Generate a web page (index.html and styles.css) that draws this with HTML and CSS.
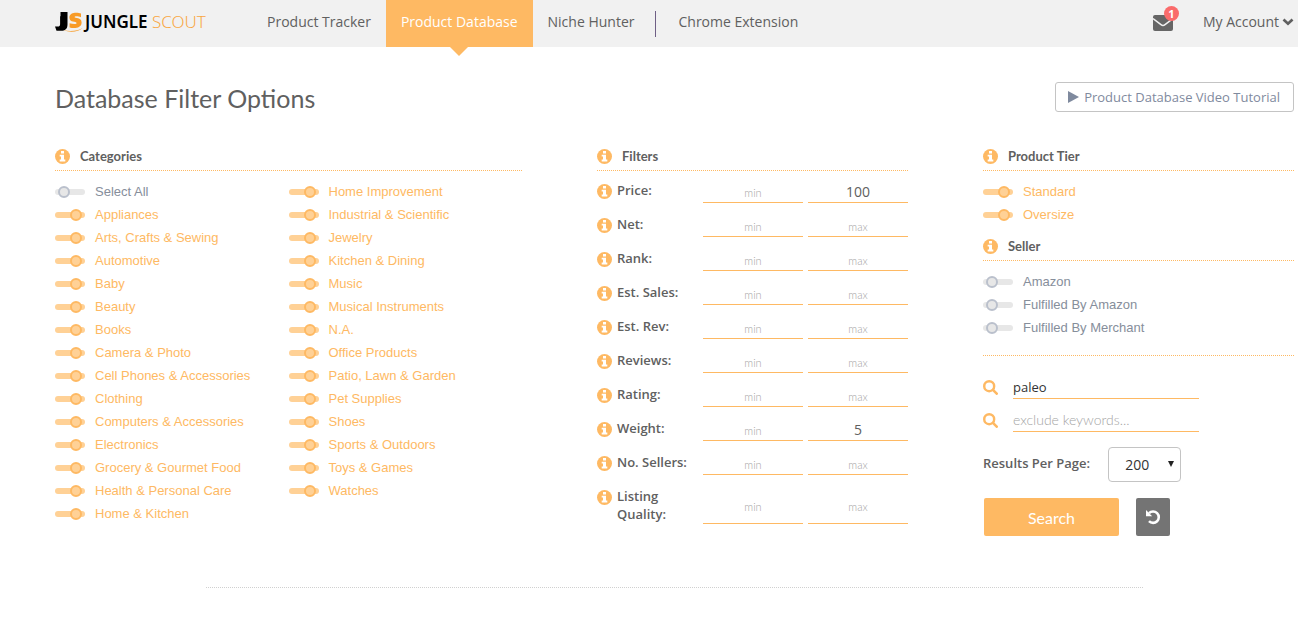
FILE: index.html
```html
<!DOCTYPE html>
<html lang="en">
<head>
<meta charset="utf-8">
<title>Product Database</title>
<link rel="stylesheet" href="styles.css">
</head>
<body>
<svg class="sprite" aria-hidden="true">
  <symbol id="info" viewBox="0 0 16 16"><circle cx="8" cy="8" r="8" fill="#feb963"/><path d="M6.400 2.200h3.200v2.500H6.400zM5 6h4.600v5.200H11v2.100H5v-2.100h1.400V8H5z" fill="#fff"/></symbol>
  <symbol id="search" viewBox="0 0 16 16"><circle cx="6.600" cy="6.600" r="5.300" fill="none" stroke="#feb963" stroke-width="2.600"/><path d="M10.600 10.600l4 4" stroke="#feb963" stroke-width="2.800" stroke-linecap="round"/></symbol>
</svg>
<header class="topbar">
  <a class="brand" href="#" aria-label="Jungle Scout">
    <svg class="brand-mark" viewBox="0 0 29 20" aria-hidden="true"><path d="M5.500 0H12.500v12.500c0 4.500-2.500 6.300-6.300 6.300H1.500L0 14.600h2.800c1.500 0 2.300-.8 2.300-2.300V4.300H5.500z" fill="#000"/><path d="M26 5.200V1.600C23 .5 14.400-.3 14.400 5.600c0 5.700 7.200 3.400 7.200 5.500 0 1.500-4 1-7 .2v4.100c4.500 1.200 12 .9 12-5 0-5.300-7-3.700-7-5.300 0-1.400 3.700-.9 6.400.1z" fill="#f89b26"/><path d="M8.500 18c6 1.600 14.500 1.200 19.300-2.300-4 4.300-13.300 5.300-19.300 2.300z" fill="#f89b26"/></svg>
    <span class="brand-name">JUNGLE <span class="brand-light">SCOUT</span></span>
  </a>
  <nav class="nav">
    <a class="nav-link" href="#">Product Tracker</a>
    <a class="nav-link active" href="#">Product Database</a>
    <a class="nav-link" href="#">Niche Hunter</a>
    <span class="nav-divider"></span>
    <a class="nav-link" href="#">Chrome Extension</a>
  </nav>
  <div class="user">
    <a class="mail" href="#" aria-label="Messages">
      <svg class="mail-icon" viewBox="0 0 20 16" aria-hidden="true"><rect width="20" height="16" rx="2" fill="#666"/><path d="M0 3.500l8 6.200q2 1.500 4 0l8-6.200" fill="none" stroke="#f1f1f1" stroke-width="1.500"/></svg>
      <span class="badge">1</span>
    </a>
    <a class="account" href="#">My Account
      <svg class="chevron" viewBox="0 0 12 8" aria-hidden="true"><path d="M1.500 1.500L6 5.700l4.500-4.200" fill="none" stroke="#606060" stroke-width="2.700"/></svg>
    </a>
  </div>
</header>

<main class="page">
  <div class="title-row">
    <h1 class="title">Database Filter Options</h1>
    <button class="tutorial" type="button"><svg class="play" viewBox="0 0 11 12" aria-hidden="true"><path d="M0 0l11 6L0 12z" fill="#7f8a9e"/></svg>Product Database Video Tutorial</button>
  </div>

  <form class="columns">
    <section>
      <h2 class="section-title"><svg class="icon"><use href="#info"/></svg>Categories</h2>
      <div class="category-columns">
        <div class="toggle-list">
          <label class="toggle"><input type="checkbox"><span>Select All</span></label>
          <label class="toggle"><input type="checkbox" checked><span>Appliances</span></label>
          <label class="toggle"><input type="checkbox" checked><span>Arts, Crafts &amp; Sewing</span></label>
          <label class="toggle"><input type="checkbox" checked><span>Automotive</span></label>
          <label class="toggle"><input type="checkbox" checked><span>Baby</span></label>
          <label class="toggle"><input type="checkbox" checked><span>Beauty</span></label>
          <label class="toggle"><input type="checkbox" checked><span>Books</span></label>
          <label class="toggle"><input type="checkbox" checked><span>Camera &amp; Photo</span></label>
          <label class="toggle"><input type="checkbox" checked><span>Cell Phones &amp; Accessories</span></label>
          <label class="toggle"><input type="checkbox" checked><span>Clothing</span></label>
          <label class="toggle"><input type="checkbox" checked><span>Computers &amp; Accessories</span></label>
          <label class="toggle"><input type="checkbox" checked><span>Electronics</span></label>
          <label class="toggle"><input type="checkbox" checked><span>Grocery &amp; Gourmet Food</span></label>
          <label class="toggle"><input type="checkbox" checked><span>Health &amp; Personal Care</span></label>
          <label class="toggle"><input type="checkbox" checked><span>Home &amp; Kitchen</span></label>
        </div>
        <div class="toggle-list">
          <label class="toggle"><input type="checkbox" checked><span>Home Improvement</span></label>
          <label class="toggle"><input type="checkbox" checked><span>Industrial &amp; Scientific</span></label>
          <label class="toggle"><input type="checkbox" checked><span>Jewelry</span></label>
          <label class="toggle"><input type="checkbox" checked><span>Kitchen &amp; Dining</span></label>
          <label class="toggle"><input type="checkbox" checked><span>Music</span></label>
          <label class="toggle"><input type="checkbox" checked><span>Musical Instruments</span></label>
          <label class="toggle"><input type="checkbox" checked><span>N.A.</span></label>
          <label class="toggle"><input type="checkbox" checked><span>Office Products</span></label>
          <label class="toggle"><input type="checkbox" checked><span>Patio, Lawn &amp; Garden</span></label>
          <label class="toggle"><input type="checkbox" checked><span>Pet Supplies</span></label>
          <label class="toggle"><input type="checkbox" checked><span>Shoes</span></label>
          <label class="toggle"><input type="checkbox" checked><span>Sports &amp; Outdoors</span></label>
          <label class="toggle"><input type="checkbox" checked><span>Toys &amp; Games</span></label>
          <label class="toggle"><input type="checkbox" checked><span>Watches</span></label>
        </div>
      </div>
    </section>

    <section>
      <h2 class="section-title"><svg class="icon"><use href="#info"/></svg>Filters</h2>
      <div class="filters">
        <div class="filter"><svg class="icon"><use href="#info"/></svg><label for="price">Price:</label><input id="price" placeholder="min"><input aria-label="Price max" placeholder="max" value="100"></div>
        <div class="filter"><svg class="icon"><use href="#info"/></svg><label for="net">Net:</label><input id="net" placeholder="min"><input aria-label="Net max" placeholder="max"></div>
        <div class="filter"><svg class="icon"><use href="#info"/></svg><label for="rank">Rank:</label><input id="rank" placeholder="min"><input aria-label="Rank max" placeholder="max"></div>
        <div class="filter"><svg class="icon"><use href="#info"/></svg><label for="sales">Est. Sales:</label><input id="sales" placeholder="min"><input aria-label="Sales max" placeholder="max"></div>
        <div class="filter"><svg class="icon"><use href="#info"/></svg><label for="rev">Est. Rev:</label><input id="rev" placeholder="min"><input aria-label="Revenue max" placeholder="max"></div>
        <div class="filter"><svg class="icon"><use href="#info"/></svg><label for="reviews">Reviews:</label><input id="reviews" placeholder="min"><input aria-label="Reviews max" placeholder="max"></div>
        <div class="filter"><svg class="icon"><use href="#info"/></svg><label for="rating">Rating:</label><input id="rating" placeholder="min"><input aria-label="Rating max" placeholder="max"></div>
        <div class="filter"><svg class="icon"><use href="#info"/></svg><label for="weight">Weight:</label><input id="weight" placeholder="min"><input aria-label="Weight max" placeholder="max" value="5"></div>
        <div class="filter"><svg class="icon"><use href="#info"/></svg><label for="sellers">No. Sellers:</label><input id="sellers" placeholder="min"><input aria-label="Sellers max" placeholder="max"></div>
        <div class="filter"><svg class="icon"><use href="#info"/></svg><label for="quality">Listing Quality:</label><input id="quality" placeholder="min"><input aria-label="Quality max" placeholder="max"></div>
      </div>
    </section>

    <section>
      <h2 class="section-title"><svg class="icon"><use href="#info"/></svg>Product Tier</h2>
      <div class="toggle-list">
        <label class="toggle"><input type="checkbox" checked><span>Standard</span></label>
        <label class="toggle"><input type="checkbox" checked><span>Oversize</span></label>
      </div>
      <h2 class="section-title seller-title"><svg class="icon"><use href="#info"/></svg>Seller</h2>
      <div class="toggle-list seller-list">
        <label class="toggle"><input type="checkbox"><span>Amazon</span></label>
        <label class="toggle"><input type="checkbox"><span>Fulfilled By Amazon</span></label>
        <label class="toggle"><input type="checkbox"><span>Fulfilled By Merchant</span></label>
      </div>
      <div class="keywords">
        <div class="keyword"><svg class="icon"><use href="#search"/></svg><input aria-label="Include keywords" value="paleo"></div>
        <div class="keyword"><svg class="icon"><use href="#search"/></svg><input aria-label="Exclude keywords" placeholder="exclude keywords..."></div>
      </div>
      <div class="results">
        <label for="per-page">Results Per Page:</label>
        <span class="select-wrap"><select id="per-page"><option>200</option><option>100</option></select><svg class="caret" viewBox="0 0 6 6" aria-hidden="true"><path d="M0 0h6L3 6z" fill="#222"/></svg></span>
      </div>
      <div class="actions">
        <button class="search-button" type="button">Search</button>
        <button class="reset-button" type="button" aria-label="Reset"><svg class="reset-icon" viewBox="0 0 16 16" aria-hidden="true"><path d="M4 4.200A5.700 5.700 0 1 1 4 12.200" fill="none" stroke="#fff" stroke-width="2.600"/><path d="M1 1v6.200h6.200z" fill="#fff"/></svg></button>
      </div>
    </section>
  </form>
  <hr class="rule">
</main>
</body>
</html>
```
FILE: styles.css
```css
*, *::before, *::after { box-sizing: border-box; }
body { margin: 0; background: #fff; color: #606060; font: 14px/20px "Open Sans", sans-serif; }
a { color: inherit; text-decoration: none; }
input, button, select { font: inherit; color: inherit; }
.sprite { display: none; }
.icon { display: block; width: 15px; height: 15px; flex: none; }

.topbar { display: flex; background: #f1f1f1; height: 47px; padding: 0 4px 0 55px; }
.brand { display: flex; gap: 1px; width: 197px; padding-top: 12px; }
.brand-mark { width: 29px; height: 20px; flex: none; }
.brand-name { color: #000; font-weight: 600; font-size: 17px; line-height: 19px; white-space: nowrap; font-family: "Noto Sans", sans-serif; }
.brand-light { color: #f9a743; font-weight: 300; }
.nav { display: flex; white-space: nowrap; }
.nav-link { position: relative; padding: 12px 15px 15px; }
.nav-link.active { background: #feb963; color: #fff; }
.nav-link.active::after { content: ""; position: absolute; top: 100%; left: 50%; margin-left: -9px; border: 9px solid transparent; border-top-color: #feb963; border-bottom: 0; }
.nav-divider { width: 1px; height: 26px; margin: 11px 7px 0 6px; background: #6f5f85; }
.user { display: flex; gap: 30px; margin-left: auto; padding-top: 12px; white-space: nowrap; }
.mail { position: relative; width: 20px; }
.mail-icon { display: block; width: 20px; height: 16px; margin-top: 3px; }
.badge { position: absolute; left: 11px; top: -6px; width: 15px; height: 15px; border-radius: 50%; background: #fa6b6b; color: #fff; font-size: 11px; font-weight: 700; line-height: 15px; text-align: center; }
.account { display: flex; align-items: center; gap: 3px; height: 20px; }
.chevron { width: 12px; height: 8px; }

.page { padding: 35px 4px 30px 55px; }
.title-row { display: flex; justify-content: space-between; align-items: flex-start; }
.title { margin: 0; font: 400 25px/32px Lato, sans-serif; }
.tutorial { display: flex; align-items: center; gap: 5px; height: 30px; padding: 0 13px 0 12px; border: 1px solid #c4c4c4; border-radius: 3px; background: #fff; color: #7f8a9e; font-size: 13px; }
.play { width: 11px; height: 12px; }
.columns { display: grid; grid-template-columns: 467fr 311fr 311fr; gap: 75px; padding-top: 34px; }
.section-title { display: flex; align-items: center; gap: 10px; height: 23px; margin: 0; padding-bottom: 6px; border-bottom: 1px dotted #feb963; font: 700 13px/16px Lato, sans-serif; }
.category-columns { display: grid; grid-template-columns: 1fr 1fr; }
.toggle-list { padding-top: 9px; }
.toggle { display: flex; align-items: center; gap: 10px; height: 23px; color: #868e9b; font: 13px/23px "Liberation Sans", Arial, sans-serif; }
.toggle:has(:checked) { color: #feb963; }
.toggle input { appearance: none; position: relative; width: 30px; height: 6px; margin: 0; border-radius: 3px; background: #e7e7e7; }
.toggle input::before { content: ""; position: absolute; top: -3px; left: 3px; width: 12px; height: 12px; border: 2px solid #bac0cc; border-radius: 50%; background: #e7e7e7; }
.toggle input:checked { background: #ffd196; }
.toggle input:checked::before { left: 15px; border-color: #feb963; background: #ffd196; }

.filter { display: grid; grid-template-columns: 15px 1fr 100px 100px; column-gap: 5px; min-height: 34px; padding: 10px 0 2px; }
.filter .icon { margin-top: 3px; }
.filter label { font-weight: 600; font-size: 13px; line-height: 18px; padding-right: 10px; }
.filter input { width: 100%; height: 22px; padding: 0; border: 0; border-bottom: 1px solid #feb963; background: none; text-align: center; outline: 0; }
.filter:last-child input { height: 37px; }
.filter input::placeholder { color: #a4a4a4; opacity: 1; font: 300 11px Lato, sans-serif; }

.seller-title { margin-top: 12px; }
.seller-list { padding-bottom: 16px; border-bottom: 1px dotted #feb963; }
.keywords { padding-top: 19px; }
.keyword { display: flex; gap: 15px; height: 33px; }
.keyword .icon { margin-top: 5px; }
.keyword input { width: 186px; height: 24px; padding: 0; border: 0; border-bottom: 1px solid #feb963; background: none; color: #333; font-size: 13px; outline: 0; }
.keyword input::placeholder { color: #a4a4a4; opacity: 1; font: 300 14px/20px Lato, sans-serif; }
.results { display: flex; gap: 18px; padding-top: 6px; }
.results label { font-weight: 600; font-size: 13px; line-height: 33px; }
.select-wrap { position: relative; }
.results select { appearance: none; display: block; width: 73px; height: 35px; padding: 0 16px; border: 1px solid #c4c4c4; border-radius: 4px; background: #fff; color: #333; }
.caret { position: absolute; top: 14px; right: 7px; width: 6px; height: 6px; pointer-events: none; }
.actions { display: flex; gap: 17px; padding: 16px 0 0 1px; }
.search-button { width: 135px; height: 38px; padding: 0; border: 0; border-radius: 2px; background: #feb963; color: #fff; font: 16px Lato, sans-serif; }
.reset-button { width: 34px; height: 38px; padding: 0; border: 0; border-radius: 2px; background: #747474; }
.reset-icon { display: block; width: 16px; height: 16px; margin: 0 auto; }
.rule { margin: 51px 151px 0; border: 0; border-top: 1px dotted #d0d0d0; }
```
